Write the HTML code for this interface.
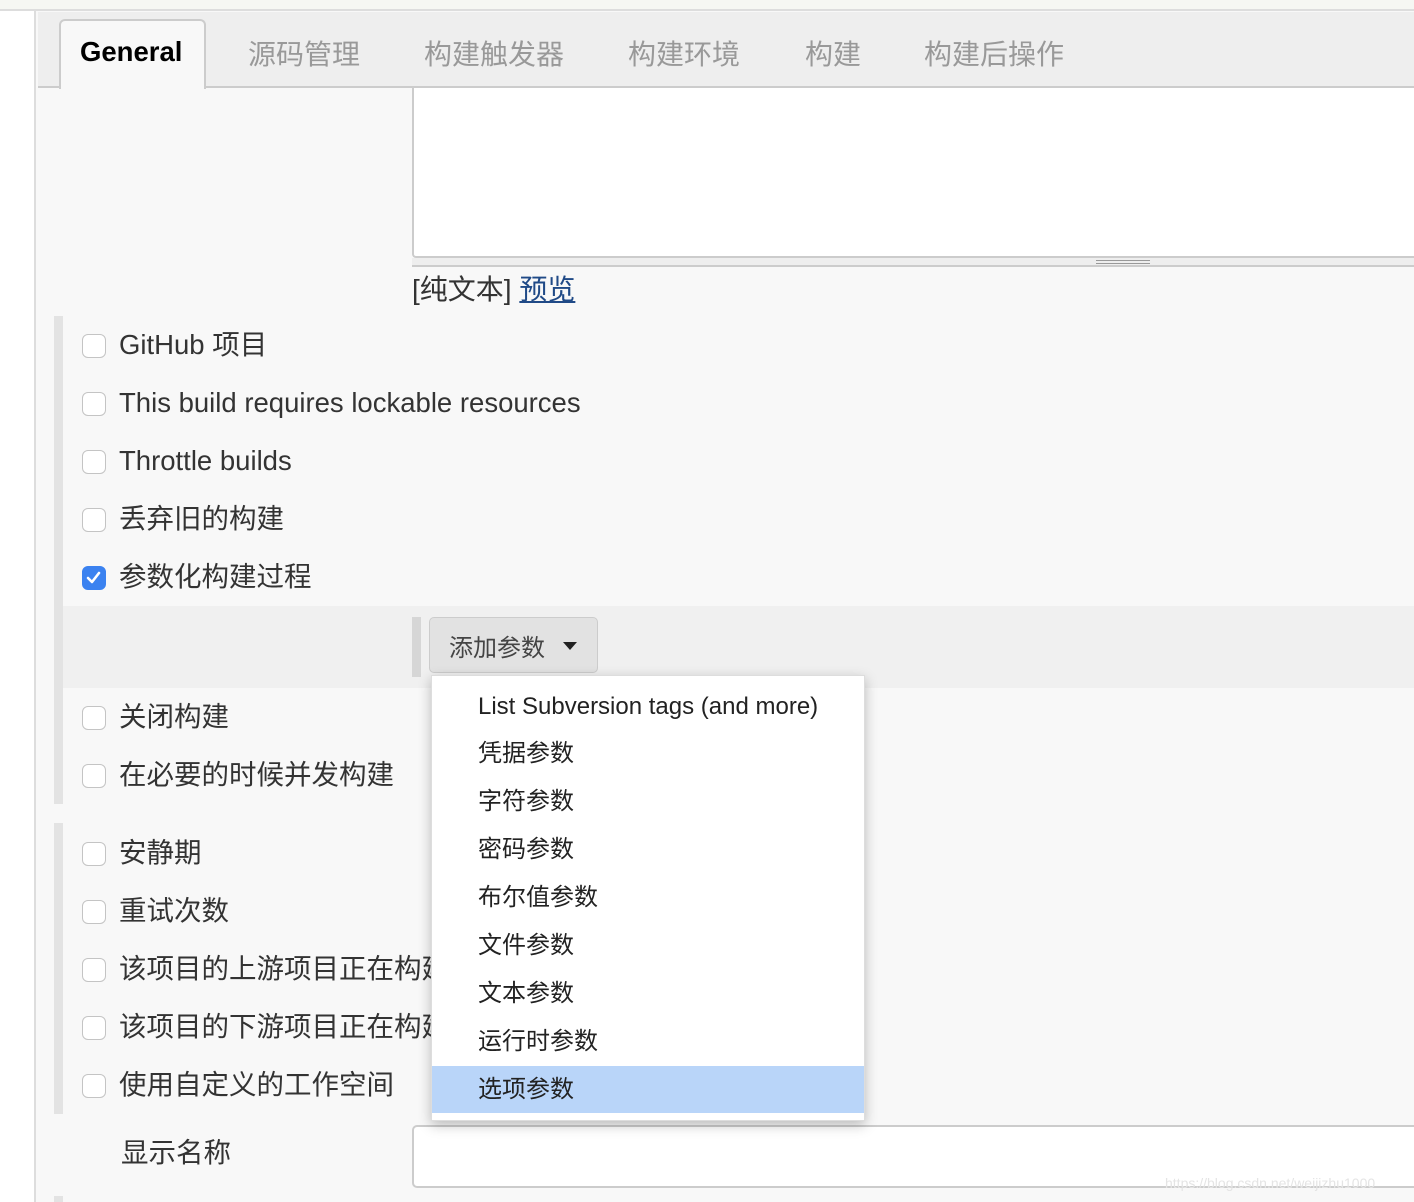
<!DOCTYPE html>
<html><head><meta charset="utf-8"><style>
*{margin:0;padding:0;box-sizing:border-box}
body{width:1414px;height:1202px;background:#f8f8f8;position:relative;overflow:hidden;font-family:"Liberation Sans","Noto Sans CJK SC",sans-serif;color:#333}
.a{position:absolute}
.t{position:absolute;font-size:28px;color:#999;top:33px;white-space:nowrap}
.cb{position:absolute;left:82px;width:24px;height:24px;border:1.5px solid #c4c4c4;border-radius:6px;background:#fff}
.lb{position:absolute;left:119px;font-size:27.5px;color:#333;white-space:nowrap;line-height:30px}
.it{position:absolute;left:478px;font-size:24px;color:#222;white-space:nowrap;line-height:28px}
</style></head><body>
<div class="a" style="left:0;top:0;width:1414px;height:11px;background:#f6f7f3;border-bottom:2px solid #ddd"></div>
<div class="a" style="left:0;top:11px;width:36px;height:1191px;background:#fff;border-right:2px solid #ddd"></div>
<div class="a" style="left:38px;top:12px;width:1376px;height:76px;background:#eee;border-bottom:2px solid #ccc"></div>
<div class="a" style="left:59px;top:19px;width:147px;height:70px;background:#f8f8f8;border:2px solid #ccc;border-bottom:none;border-radius:6px 6px 0 0"></div>
<div class="a" style="left:80px;top:36px;font-size:27.5px;font-weight:bold;color:#000">General</div>
<div class="t" style="left:248px">源码管理</div>
<div class="t" style="left:424px">构建触发器</div>
<div class="t" style="left:628px">构建环境</div>
<div class="t" style="left:805px">构建</div>
<div class="t" style="left:924px">构建后操作</div>
<div class="a" style="left:412px;top:88px;width:1002px;height:170px;background:#fff;border-left:2px solid #ccc;border-bottom:2px solid #ccc;border-radius:0 0 0 4px"></div>
<div class="a" style="left:412px;top:258px;width:1002px;height:9px;background:#eee;border-bottom:2px solid #ccc"></div>
<div class="a" style="left:1096px;top:260px;width:54px;height:4px;border-top:1.5px solid #999;border-bottom:1.5px solid #999"></div>
<div class="a" style="left:412px;top:268px;font-size:28px;color:#333">[纯文本] <span style="color:#204a87;text-decoration:underline">预览</span></div>
<div class="a" style="left:54px;top:316px;width:9px;height:488px;background:#e3e3e3"></div>
<div class="a" style="left:54px;top:823px;width:9px;height:291px;background:#e3e3e3"></div>
<div class="a" style="left:54px;top:1196px;width:9px;height:6px;background:#e3e3e3"></div>
<div class="cb" style="top:334px"></div><div class="lb" style="top:330px">GitHub 项目</div>
<div class="cb" style="top:392px"></div><div class="lb" style="top:388px">This build requires lockable resources</div>
<div class="cb" style="top:450px"></div><div class="lb" style="top:446px">Throttle builds</div>
<div class="cb" style="top:508px"></div><div class="lb" style="top:504px">丢弃旧的构建</div>
<div class="cb" style="top:566px;background:#3b82f0;border-color:#3b82f0"><svg width="21" height="21" viewBox="0 0 21 21" style="position:absolute;left:0;top:0"><path d="M5 11 L9 15 L16 6" stroke="#fff" stroke-width="2.6" fill="none" stroke-linecap="round" stroke-linejoin="round"/></svg></div>
<div class="lb" style="top:562px">参数化构建过程</div>
<div class="a" style="left:63px;top:606px;width:1351px;height:82px;background:#f0f0f0"></div>
<div class="a" style="left:412px;top:617px;width:9px;height:60px;background:#d6d6d6"></div>
<div class="a" style="left:429px;top:617px;width:169px;height:56px;background:#e2e2e2;border:1px solid #ccc;border-radius:5px"></div>
<div class="a" style="left:449px;top:628px;font-size:24px;color:#444">添加参数</div>
<div class="a" style="left:563px;top:642px;width:0;height:0;border-left:7px solid transparent;border-right:7px solid transparent;border-top:8px solid #222"></div>
<div class="cb" style="top:706px"></div><div class="lb" style="top:702px">关闭构建</div>
<div class="cb" style="top:764px"></div><div class="lb" style="top:760px">在必要的时候并发构建</div>
<div class="cb" style="top:842px"></div><div class="lb" style="top:838px">安静期</div>
<div class="cb" style="top:900px"></div><div class="lb" style="top:896px">重试次数</div>
<div class="cb" style="top:958px"></div><div class="lb" style="top:954px">该项目的上游项目正在构建</div>
<div class="cb" style="top:1016px"></div><div class="lb" style="top:1012px">该项目的下游项目正在构建</div>
<div class="cb" style="top:1074px"></div><div class="lb" style="top:1070px">使用自定义的工作空间</div>
<div class="lb" style="left:121px;top:1138px">显示名称</div>
<div class="a" style="left:412px;top:1125px;width:1010px;height:63px;background:#fff;border:2px solid #ccc;border-radius:5px"></div>
<div class="a" style="left:431px;top:675px;width:434px;height:446px;background:#fff;border:1px solid #ddd;box-shadow:0 4px 12px rgba(0,0,0,0.25)"></div>
<div class="a" style="left:432px;top:1066px;width:432px;height:47px;background:#b9d5f9"></div>
<div class="it" style="top:693px">List Subversion tags (and more)</div>
<div class="it" style="top:740px">凭据参数</div>
<div class="it" style="top:788px">字符参数</div>
<div class="it" style="top:836px">密码参数</div>
<div class="it" style="top:884px">布尔值参数</div>
<div class="it" style="top:932px">文件参数</div>
<div class="it" style="top:980px">文本参数</div>
<div class="it" style="top:1028px">运行时参数</div>
<div class="it" style="top:1076px">选项参数</div>
<div class="a" style="left:1165px;top:1175px;font-size:14px;color:#e4e4e4">https://blog.csdn.net/weijizhu1000</div>
</body></html>
